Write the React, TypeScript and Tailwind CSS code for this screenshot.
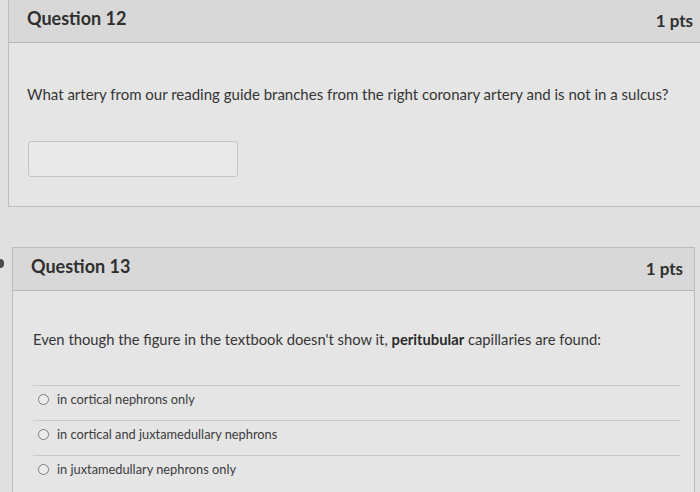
import React from "react";

function Radio() {
  return (
    <span className="ml-[5px] mt-[5px] h-[11px] w-[11px] shrink-0 rounded-full border-[1.5px] border-[#7d7d7d] bg-[#ececec]" />
  );
}

function Option({ text }: { text: string }) {
  return (
    <div className="flex items-start gap-[8px] border-t border-[#c9c9c9] pt-[3px] pb-[11px]">
      <Radio />
      <span className="text-[12.8px] leading-[20px] text-[#3c3c3c]">{text}</span>
    </div>
  );
}

export default function App() {
  return (
    <div
      className="relative h-[492px] w-[700px] overflow-hidden bg-[#e0e0e0]"
      style={{ fontFamily: "Lato, 'Open Sans', sans-serif" }}
    >
      {/* Question 12 */}
      <div className="ml-[8px] mr-[-6px] border border-t-0 border-[#bdbdbd] bg-[#e5e5e5]">
        <div className="flex h-[43px] items-start justify-between border-b border-[#b7b7b7] bg-[#d8d8d8] pl-[18px] pr-[12px] pt-[7px]">
          <span className="text-[18px] font-bold leading-[22px] text-[#2f2f2f]">Question 12</span>
          <span className="mt-[3px] text-[17px] font-bold leading-[22px] text-[#2f2f2f]">1 pts</span>
        </div>
        <div className="px-[18px] pt-[41px] pb-[29px]">
          <p className="text-[15px] leading-[20px] text-[#353535]">
            What artery from our reading guide branches from the right coronary artery and is not in a sulcus?
          </p>
          <div className="ml-[1px] mt-[37px] h-[36px] w-[210px] rounded-[3px] border border-[#c6c6c6] bg-[#e9e9e9]" />
        </div>
      </div>

      {/* Question 13 */}
      <div className="ml-[12px] mr-[5px] mt-[40px] border border-[#bdbdbd] bg-[#e5e5e5]">
        <div className="flex h-[43px] items-start justify-between border-b border-[#b7b7b7] bg-[#d8d8d8] pl-[18px] pr-[11px] pt-[7px]">
          <span className="text-[18px] font-bold leading-[22px] text-[#2f2f2f]">Question 13</span>
          <span className="mt-[3px] text-[17px] font-bold leading-[22px] text-[#2f2f2f]">1 pts</span>
        </div>
        <div className="pl-[20px] pr-[14px] pt-[38px] pb-[20px]">
          <p className="text-[14.75px] leading-[20px] text-[#353535]">
            Even though the figure in the textbook doesn't show it, <b className="font-bold text-[#2a2a2a]">peritubular</b> capillaries are found:
          </p>
          <div className="mt-[36px]">
            <Option text="in cortical nephrons only" />
            <Option text="in cortical and juxtamedullary nephrons" />
            <Option text="in juxtamedullary nephrons only" />
          </div>
        </div>
      </div>

      <span className="absolute left-[-4px] top-[259px] h-[9px] w-[8px] rounded-full bg-[#4a4a4a]" />
    </div>
  );
}
